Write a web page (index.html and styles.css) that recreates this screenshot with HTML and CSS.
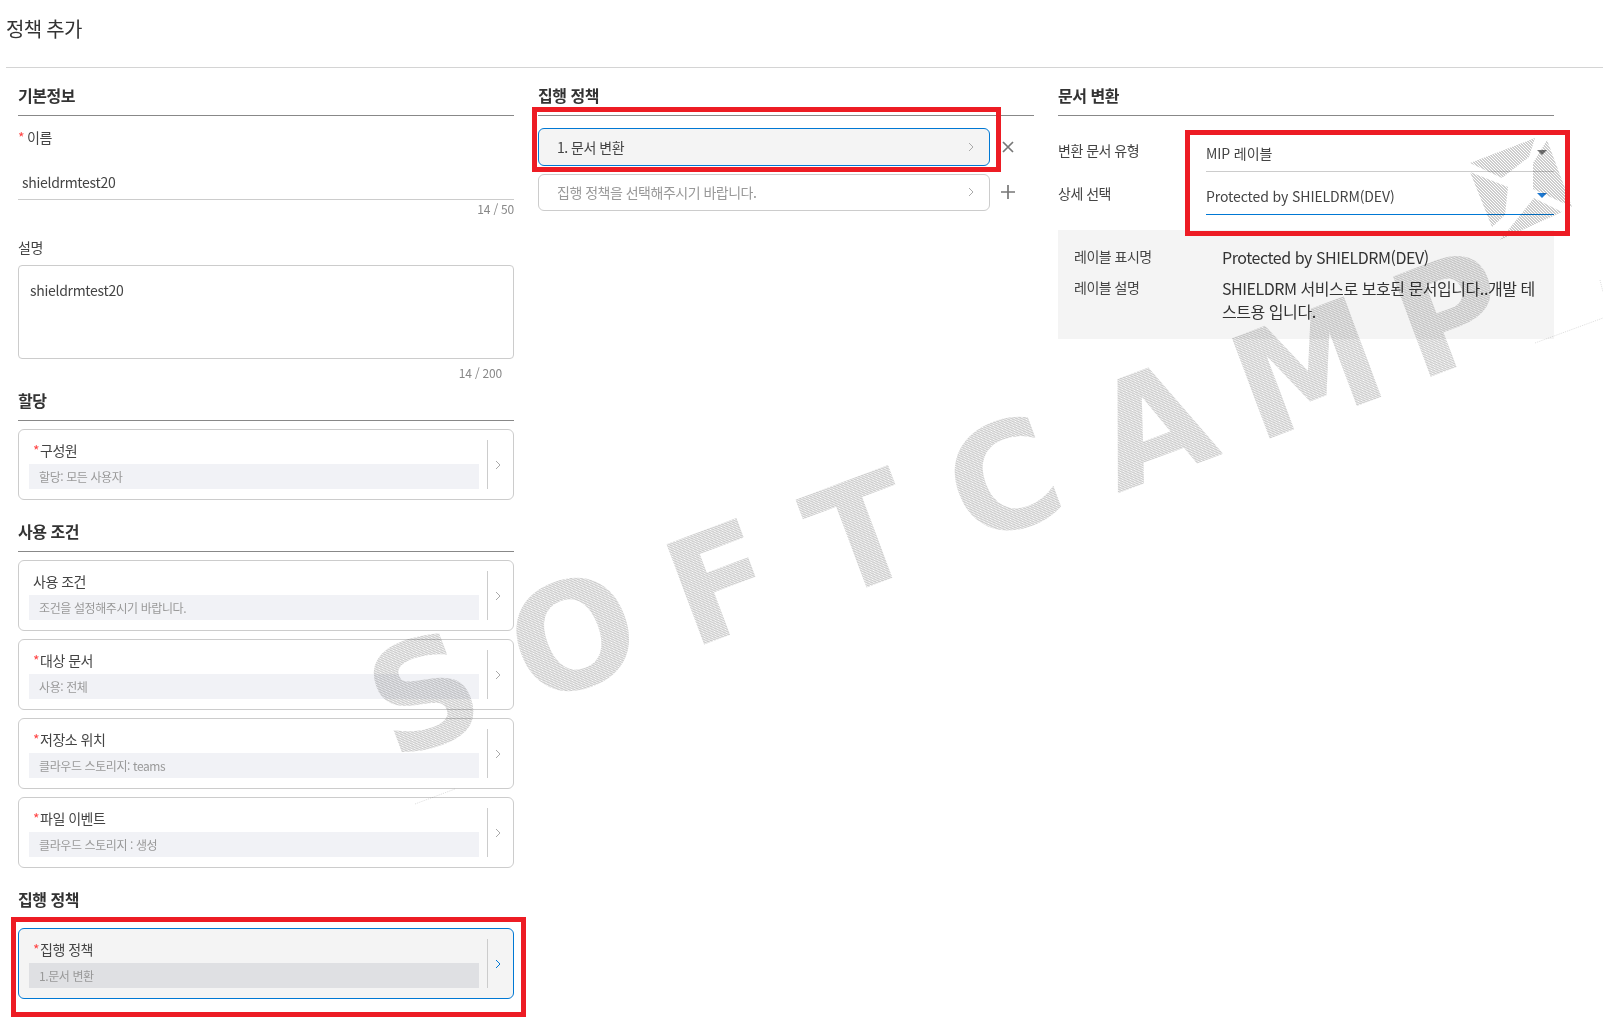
FILE: index.html
```html
<!DOCTYPE html>
<html lang="ko">
<head>
  <meta charset="utf-8">
  <title>정책 추가</title>
  <link rel="stylesheet" href="styles.css">
</head>
<body>

<svg width="0" height="0" class="defs">
  <defs>
    <pattern id="hatch" width="3" height="3" patternUnits="userSpaceOnUse">
      <path d="M0 0h2v1h-2z M1 1h2v1h-2z M2 2h1v1h-1z M0 2h1v1h-1z" fill="#cdcdcd" shape-rendering="crispEdges"></path>
    </pattern>
    <symbol id="chev" viewBox="0 0 6 10"><polyline points="1,1 5,5 1,9" fill="none" stroke="currentColor" stroke-width="1"></polyline></symbol>
  </defs>
</svg>

<h1 class="page-title">정책 추가</h1>

<div class="columns">
  <div class="col">
    <h2 class="head">기본정보</h2>
    <div class="label"><span class="req req-gap">*</span>이름</div>
    <div class="input">shieldrmtest20</div>
    <div class="count">14 / 50</div>
    <div class="label label-desc">설명</div>
    <div class="textarea">shieldrmtest20</div>
    <div class="count count-in">14 / 200</div>

    <h2 class="head head-tight">할당</h2>
    <div class="cards">
      <div class="card">
        <div class="card-body">
          <div class="card-title"><span class="req">*</span>구성원</div>
          <div class="card-value">할당: 모든 사용자</div>
        </div>
        <div class="card-arrow"><svg class="chev"><use href="#chev"></use></svg></div>
      </div>
    </div>

    <h2 class="head">사용 조건</h2>
    <div class="cards">
      <div class="card">
        <div class="card-body">
          <div class="card-title">사용 조건</div>
          <div class="card-value">조건을 설정해주시기 바랍니다.</div>
        </div>
        <div class="card-arrow"><svg class="chev"><use href="#chev"></use></svg></div>
      </div>
      <div class="card">
        <div class="card-body">
          <div class="card-title"><span class="req">*</span>대상 문서</div>
          <div class="card-value">사용: 전체</div>
        </div>
        <div class="card-arrow"><svg class="chev"><use href="#chev"></use></svg></div>
      </div>
      <div class="card">
        <div class="card-body">
          <div class="card-title"><span class="req">*</span>저장소 위치</div>
          <div class="card-value">클라우드 스토리지: teams</div>
        </div>
        <div class="card-arrow"><svg class="chev"><use href="#chev"></use></svg></div>
      </div>
      <div class="card">
        <div class="card-body">
          <div class="card-title"><span class="req">*</span>파일 이벤트</div>
          <div class="card-value">클라우드 스토리지 : 생성</div>
        </div>
        <div class="card-arrow"><svg class="chev"><use href="#chev"></use></svg></div>
      </div>
    </div>

    <h2 class="head">집행 정책</h2>
    <div class="cards">
      <div class="card card-on">
        <div class="card-body">
          <div class="card-title"><span class="req">*</span>집행 정책</div>
          <div class="card-value">1.문서 변환</div>
        </div>
        <div class="card-arrow"><svg class="chev"><use href="#chev"></use></svg></div>
      </div>
    </div>
  </div>

  <div class="col">
    <h2 class="head">집행 정책</h2>
    <div class="steps">
      <div class="step-row">
        <div class="step step-on">1. 문서 변환<svg class="chev"><use href="#chev"></use></svg></div>
        <svg class="step-icon" viewBox="0 0 14 14"><path d="M2 2 L12 12 M12 2 L2 12"></path></svg>
      </div>
      <div class="step-row">
        <div class="step step-empty">집행 정책을 선택해주시기 바랍니다.<svg class="chev"><use href="#chev"></use></svg></div>
        <svg class="step-icon" viewBox="0 0 14 14"><path d="M7 0 V14 M0 7 H14"></path></svg>
      </div>
    </div>
  </div>

  <div class="col">
    <h2 class="head">문서 변환</h2>
    <div class="form">
      <div class="form-label">변환 문서 유형</div>
      <div class="select">MIP 레이블<i class="caret"></i></div>
      <div class="form-label">상세 선택</div>
      <div class="select select-on">Protected by SHIELDRM(DEV)<i class="caret"></i></div>
    </div>
    <div class="info">
      <div class="info-label">레이블 표시명</div>
      <div class="info-value">Protected by SHIELDRM(DEV)</div>
      <div class="info-label">레이블 설명</div>
      <div class="info-value">SHIELDRM 서비스로 보호된 문서입니다..개발 테스트용 입니다.</div>
    </div>
  </div>
</div>

<!-- watermark over the page -->
<svg class="watermark" viewBox="0 0 1603 1027">
  <g class="wm-letters" fill="url(#hatch)">
    <text x="424" y="746" transform="rotate(-20.5 424 693)">S</text>
    <text x="573" y="688" transform="rotate(-20.5 573 635)">O</text>
    <text x="720" y="635" transform="rotate(-20.5 720 582)">F</text>
    <text x="861" y="586" transform="rotate(-20.5 861 533)">T</text>
    <text x="1003" y="531" transform="rotate(-20.5 1003 478)">C</text>
    <text x="1152" y="477" transform="rotate(-20.5 1152 424)">A</text>
    <text x="1307" y="421" transform="rotate(-20.5 1307 368)">M</text>
    <text x="1450" y="366" transform="rotate(-20.5 1450 313)">P</text>
  </g>
  <g fill="url(#hatch)">
    <polygon points="1470,163 1535,138 1529,157 1502,178"></polygon>
    <polygon points="1547,140 1572,207 1533,189 1533,163"></polygon>
    <polygon points="1470,172 1508,187 1505,215 1492,227"></polygon>
    <polygon points="1500,240 1534,198 1562,212"></polygon>
  </g>
  <path class="wm-line" d="M415 804 L455 789 M1535 343 L1603 318 M1600 280 L1603 292"></path>
</svg>

<div class="mark mark-a"></div>
<div class="mark mark-b"></div>
<div class="mark mark-c"></div>

</body>
</html>
```
FILE: styles.css
```css
* {
    box-sizing: border-box;
}
body {
    margin: 0;
    position: relative;
    height: 1027px;
    overflow: hidden;
    font-family: "Noto Sans CJK KR", "Noto Sans", sans-serif;
    font-size: 14px;
    line-height: 20px;
    letter-spacing: -0.5px;
    color: #444;
    background: #fff;
}
.defs {
    position: absolute;
}
.page-title {
    height: 68px;
    margin: 0 0 0 6px;
    padding: 15px 0 0;
    border-bottom: 1px solid #d4d4d4;
    font-size: 20px;
    font-weight: 400;
    line-height: 28px;
    letter-spacing: -0.7px;
    color: #333;
}
.columns {
    display: grid;
    grid-template-columns: 496px 496px 496px;
    column-gap: 24px;
    padding: 17px 0 0 18px;
}

.head {
    margin: 21px 0 0;
    padding-bottom: 10px;
    border-bottom: 1px solid #888;
    font-size: 16px;
    font-weight: 700;
    line-height: 20px;
    color: #333;
}
.col > .head:first-child {
    margin-top: 0;
}
.head-tight {
    margin-top: 8px;
}

.req {
    color: #f44;
    font-size: 14px;
}
.req-gap {
    margin-right: 3px;
}
.label {
    margin-top: 11px;
}
.label-desc {
    margin-top: 19px;
}
.input {
    height: 40px;
    margin-top: 13px;
    padding: 12px 0 0 4px;
    border-bottom: 1px solid #ccc;
    letter-spacing: -0.3px;
}
.count {
    height: 18px;
    font-size: 12px;
    line-height: 18px;
    letter-spacing: -0.2px;
    text-align: right;
    color: #888;
}
.textarea {
    height: 94px;
    margin-top: 8px;
    padding: 14px 11px;
    border: 1px solid #ccc;
    border-radius: 4px;
    letter-spacing: -0.3px;
}
.count-in {
    margin-top: 5px;
    padding-right: 12px;
}

.cards {
    display: flex;
    flex-direction: column;
    gap: 8px;
    margin-top: 8px;
}
.card {
    display: flex;
    height: 71px;
    padding: 10px 0 10px 10px;
    border: 1px solid #ccc;
    border-radius: 6px;
}
.card-body {
    display: flex;
    flex-direction: column;
    justify-content: space-between;
    width: 450px;
}
.card-title {
    padding-left: 4px;
    line-height: 20px;
}
.card-title .req {
    margin-right: 1px;
}
.card-value {
    height: 25px;
    padding-left: 10px;
    background: #f1f2f6;
    font-size: 12px;
    line-height: 25px;
    letter-spacing: -0.4px;
    color: #999;
}
.card-arrow {
    display: flex;
    align-items: center;
    margin-left: 8px;
    padding-left: 7px;
    border-left: 1px solid #ccc;
    color: #aaa;
}
.chev {
    display: block;
    width: 6px;
    height: 10px;
}
.card-on {
    border-color: #0078d4;
    background: #f4f4f4;
}
.card-on .card-value {
    background: #dfe0e3;
}
.card-on .card-arrow {
    color: #0078d4;
}

.steps {
    display: flex;
    flex-direction: column;
    gap: 8px;
    margin-top: 12px;
}
.step-row {
    display: flex;
    align-items: center;
}
.step {
    display: flex;
    align-items: center;
    justify-content: space-between;
    width: 452px;
    height: 37.5px;
    padding: 0 15px 0 18px;
    border: 1px solid #ccc;
    border-radius: 6px;
}
.step .chev {
    color: #aaa;
}
.step-on {
    border-color: #0078d4;
    background: #f4f4f4;
}
.step-empty {
    color: #999;
}
.step-icon {
    width: 14px;
    height: 14px;
    margin-left: 11px;
    fill: none;
    stroke: #777;
    stroke-width: 1.7;
}

.form {
    display: grid;
    grid-template-columns: 148px 1fr;
    margin-top: 13px;
}
.form-label {
    padding-top: 11px;
}
.select {
    position: relative;
    height: 43px;
    padding-top: 14px;
    border-bottom: 1px solid #ccc;
    letter-spacing: -0.1px;
}
.select-on {
    border-bottom-color: #0078d4;
}
.caret {
    position: absolute;
    right: 7px;
    top: 21px;
    border-top: 5px solid #777;
    border-left: 5px solid transparent;
    border-right: 5px solid transparent;
}
.select-on .caret {
    border-top-color: #1e78d0;
}
.info {
    display: grid;
    grid-template-columns: 148px 316px;
    align-content: start;
    row-gap: 8px;
    height: 109px;
    margin-top: 15px;
    padding: 16px 16px 0;
    background: #f4f4f4;
}
.info-label {
    font-size: 14px;
    line-height: 20px;
}
.info-value {
    font-size: 16px;
    line-height: 23px;
    letter-spacing: -0.45px;
    color: #333;
}

.watermark {
    position: absolute;
    left: 0;
    top: 0;
    width: 1603px;
    height: 1027px;
    pointer-events: none;
    mix-blend-mode: multiply;
}
.wm-letters {
    font-family: "DejaVu Sans", sans-serif;
    font-size: 147px;
    font-weight: 700;
    text-anchor: middle;
    letter-spacing: 0;
}
.wm-line {
    fill: none;
    stroke: #ddd;
    stroke-width: 1;
    stroke-dasharray: 1 1;
}

/* red annotation boxes */
.mark {
    position: absolute;
    border: 5px solid #ed1c24;
}
.mark-a {
    left: 11px;
    top: 917px;
    width: 515px;
    height: 100px;
}
.mark-b {
    left: 532px;
    top: 107px;
    width: 469px;
    height: 65px;
}
.mark-c {
    left: 1185px;
    top: 130px;
    width: 385px;
    height: 106px;
}
```
